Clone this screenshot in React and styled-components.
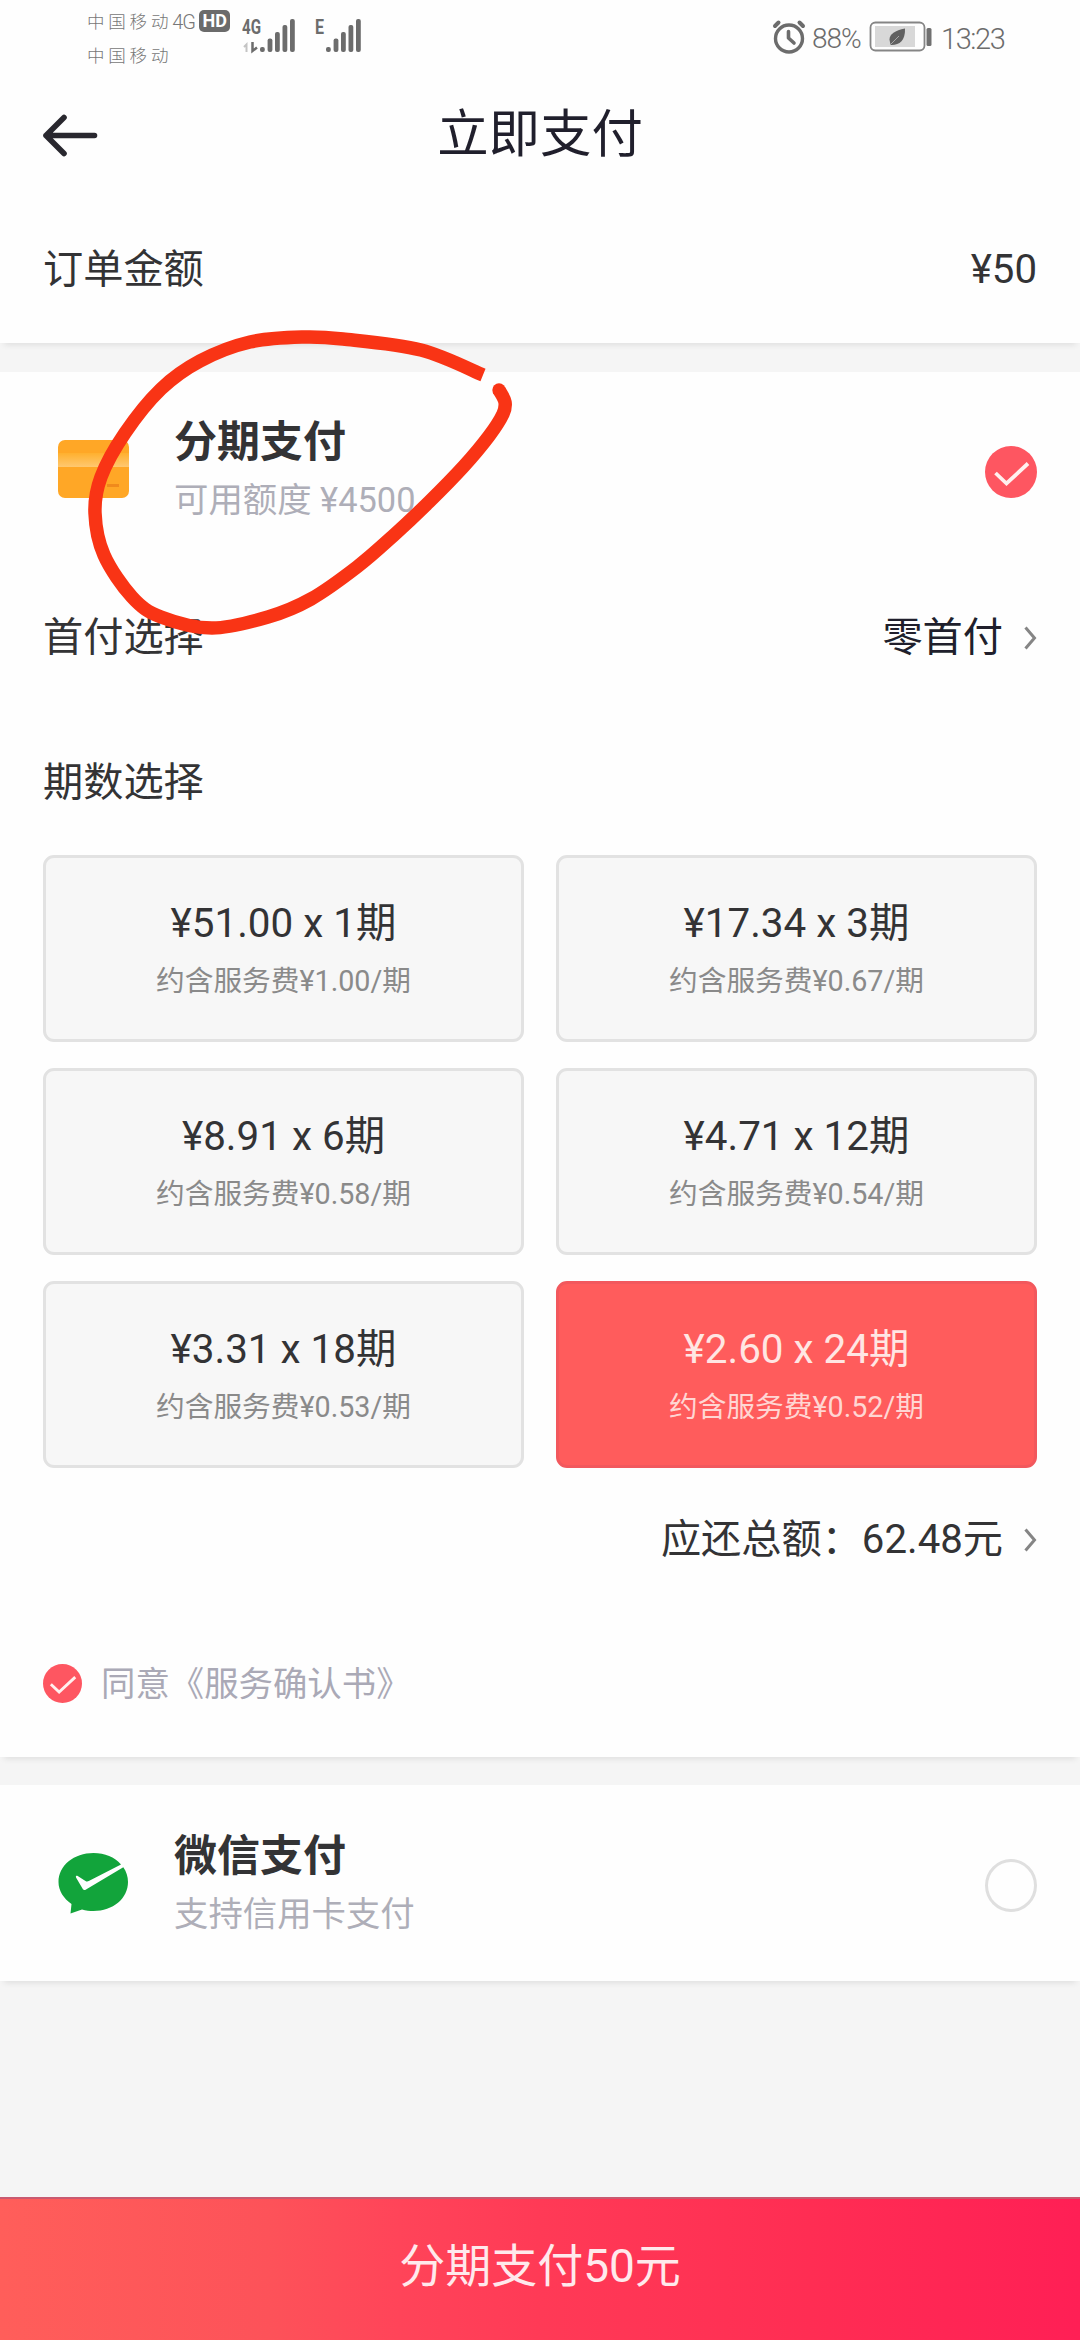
import React from "react";
import styled, { createGlobalStyle } from "styled-components";

const GlobalStyle = createGlobalStyle`
  *, *::before, *::after { box-sizing: border-box; }
  body {
    margin: 0;
    background: #f5f5f5;
    font-family: Roboto, "Noto Sans CJK SC", sans-serif;
    color: #333335;
  }
`;

const Page = styled.div`
  position: relative;
  display: flex;
  flex-direction: column;
  width: 1080px;
  height: 2340px;
  overflow: hidden;
  background: #f5f5f5;
`;

/* ---------- status bar ---------- */

const StatusBar = styled.div`
  display: flex;
  justify-content: space-between;
  height: 76px;
  padding: 0 76px 0 87px;
  background: #fefefe;
  color: #6c6c6c;
`;

const Carriers = styled.div`
  display: flex;
  flex-direction: column;
  gap: 4px;
  width: 144px;
  padding-top: 7px;
`;

const CarrierLine = styled.div`
  display: flex;
  align-items: center;
  height: 30px;
  font-size: 17.5px;
  font-weight: 300;
  line-height: 30px;
  white-space: nowrap;
  color: #777;
`;

const CarrierName = styled.span`
  letter-spacing: 3.8px;
`;

const NetworkTag = styled.span`
  width: 27px;
  font-size: 20px;
  letter-spacing: -1px;
`;

const HdBadge = styled.span`
  display: flex;
  align-items: center;
  justify-content: center;
  flex: none;
  width: 31px;
  height: 22px;
  margin-top: -3px;
  border-radius: 5px;
  background: #6b6b6b;
  color: #fff;
  font-family: Roboto, sans-serif;
  font-size: 18px;
  font-weight: 700;
  line-height: 20px;
`;

const StatusLeft = styled.div`
  display: flex;
`;

const Signals = styled.div`
  display: flex;
  gap: 19px;
  padding: 10px 0 0 11px;
`;

const StatusRight = styled.div`
  display: flex;
  padding-top: 18px;
`;

const StatusText = styled.span`
  width: ${(p) => p.$width}px;
  margin-left: ${(p) => p.$gap}px;
  padding-top: 5px;
  font-size: ${(p) => p.$size}px;
  font-weight: 300;
  line-height: 32px;
  letter-spacing: ${(p) => p.$track || 0}px;
  white-space: nowrap;
`;

const BatteryIcon = styled.svg`
  margin: 3px 0 0 9px;
`;

/* ---------- header ---------- */

const Header = styled.header`
  display: grid;
  grid-template-columns: 100px 1fr 100px;
  align-items: center;
  height: 120px;
  padding: 0 42px;
  background: #fefefe;
`;

const Title = styled.h1`
  margin: 0;
  padding-bottom: 2px;
  font-size: 51.4px;
  font-weight: 400;
  line-height: 60px;
  text-align: center;
  color: #201f2c;
`;

/* ---------- sections ---------- */

const Section = styled.section`
  display: flex;
  flex-direction: column;
  flex: none;
  height: ${(p) => p.$height}px;
  margin-bottom: ${(p) => p.$after || 0}px;
  padding: 0 43px;
  background: #fefefe;
  box-shadow: 0 6px 6px -4px rgba(0, 0, 0, 0.09);
`;

const Row = styled.div`
  display: flex;
  align-items: center;
  justify-content: ${(p) => (p.$end ? "flex-end" : "space-between")};
  flex: none;
  height: ${(p) => p.$height}px;
  font-size: 40.2px;
  line-height: 48px;
`;

const RowValue = styled.span`
  display: flex;
  align-items: center;
  gap: 21px;
  color: ${(p) => p.$color || "inherit"};
`;

const Method = styled.div`
  display: flex;
  align-items: center;
  flex: none;
  height: ${(p) => p.$height}px;
`;

const MethodIcon = styled.svg`
  flex: none;
  margin: 0 43px 0 14px;
`;

const MethodText = styled.div`
  display: flex;
  flex-direction: column;
  flex: 1;
  padding-top: 1px;
`;

const MethodName = styled.div`
  font-size: 43px;
  font-weight: 700;
  line-height: 60px;
`;

const MethodNote = styled.div`
  font-size: 34.4px;
  line-height: 56px;
  color: #aeaeb8;
`;

const MethodMark = styled.span`
  display: flex;
  padding-top: 5px;
`;

const EmptyRadio = styled.span`
  width: 52px;
  height: 53px;
  border: 3px solid #dfdfdf;
  border-radius: 50%;
`;

/* ---------- instalment plans ---------- */

const Plans = styled.div`
  display: grid;
  grid-template-columns: 1fr 1fr;
  grid-auto-rows: 187px;
  gap: 26px 32px;
`;

const Plan = styled.button`
  display: flex;
  flex-direction: column;
  align-items: center;
  margin: 0;
  padding: 39px 0 0;
  border: 3px solid ${(p) => (p.$selected ? "#f2585d" : "#e2e2e2")};
  border-radius: 11px;
  background: ${(p) => (p.$selected ? "#ff5c5c" : "#f7f7f7")};
  color: ${(p) => (p.$selected ? "#ffe6e3" : "#333335")};
  font-family: inherit;
`;

const PlanPrice = styled.span`
  font-size: 40.4px;
  line-height: 54px;
`;

const PlanFee = styled.span`
  margin-top: 10px;
  font-size: 28.7px;
  line-height: 40px;
  color: ${(p) => (p.$selected ? "#ffd6d3" : "#8a8a8a")};
`;

const Agreement = styled.div`
  display: flex;
  align-items: center;
  gap: 19px;
  height: 76px;
  font-size: 34.4px;
  line-height: 48px;
  color: #aaa9b6;
`;

const PayButton = styled.button`
  display: flex;
  align-items: center;
  justify-content: center;
  height: 143px;
  margin: auto 0 0;
  padding: 0 0 16px;
  border: 0;
  border-top: 2px solid #c95a70;
  background: linear-gradient(90deg, #ff5e5a 0%, #fd5259 25%, #ff4459 37%, #ff3a56 50%, #ff2d53 75%, #ff1f55 100%);
  color: #ffe9ec;
  font-family: inherit;
  font-size: 46px;
`;

/* ---------- pen mark ---------- */

const PenLayer = styled.svg`
  position: absolute;
  left: 0;
  top: 320px;
  pointer-events: none;
`;

function smoothPath(pts) {
  let d = `M${pts[0][0]} ${pts[0][1]}`;
  for (let i = 0; i < pts.length - 1; i++) {
    const a = pts[i - 1] || pts[i];
    const b = pts[i];
    const c = pts[i + 1];
    const e = pts[i + 2] || c;
    d += ` C${b[0] + (c[0] - a[0]) / 6} ${b[1] + (c[1] - a[1]) / 6} ${c[0] - (e[0] - b[0]) / 6} ${c[1] - (e[1] - b[1]) / 6} ${c[0]} ${c[1]}`;
  }
  return d;
}

const penPoints = [
  [483, 375], [421, 350], [343, 339], [304, 337], [250, 342], [200, 361],
  [161, 389], [125, 433], [101, 477], [95, 513], [104, 555], [132, 597],
  [161, 617], [212, 628], [268, 617], [311, 599], [357, 567],
  [393, 536], [429, 502], [464, 466], [489, 436], [503, 414], [505, 402], [499, 390],
];

function PenCircle() {
  return (
    <PenLayer width="540" height="330" viewBox="0 320 540 330" fill="none">
      <path d={smoothPath(penPoints)} stroke="#f93415" strokeWidth="13.5" strokeLinejoin="round" />
      <circle cx="499" cy="390" r="6.7" fill="#f93415" />
    </PenLayer>
  );
}

/* ---------- icons ---------- */

const signalBars = [
  [0, 29, 5],
  [7.6, 20.5, 13.5],
  [15, 14, 20],
  [22.5, 7, 27],
  [30, 1, 33],
];

function Signal({ label, data }) {
  const shift = data ? 18 : 11;
  return (
    <svg width={shift + 36} height="44" viewBox={`0 -8 ${shift + 36} 44`} fill="#6c6c6c">
      <text
        x="0"
        y="16"
        fontSize="20"
        fontWeight="700"
        fontFamily="Roboto, sans-serif"
        textLength={data ? 19 : 9}
        lengthAdjust="spacingAndGlyphs"
      >
        {label}
      </text>
      {data && (
        <g>
          <path d="M4.5 34V26.5L2 29" stroke="#c4c4c4" strokeWidth="2" fill="none" />
          <path d="M10.5 24V33L15 29.5" stroke="#6c6c6c" strokeWidth="2.5" fill="none" />
        </g>
      )}
      {signalBars.map(([x, y, h]) => (
        <rect key={x} x={shift + x} y={y} width="4.8" height={h} rx="2" />
      ))}
    </svg>
  );
}

function Alarm() {
  return (
    <svg width="34" height="36" fill="none" stroke="#6c6c6c" strokeLinecap="round">
      <circle cx="17" cy="20.5" r="13.5" strokeWidth="3.4" />
      <path d="M3 8L6.5 4.5M31 8L27.5 4.5" strokeWidth="4" />
      <path d="M16.5 13.5V20L22 25" strokeWidth="3.6" strokeLinejoin="round" />
    </svg>
  );
}

function Battery() {
  return (
    <BatteryIcon width="64" height="32" viewBox="0 0 64 32">
      <rect x="1.5" y="1.5" width="54" height="28" rx="5" fill="#fefefe" stroke="#858585" strokeWidth="1.8" />
      <rect x="6" y="5" width="40" height="21" fill="#d8d8d8" />
      <path d="M36 7.5C26 9.5 20.5 13 20.5 18.5L21.5 24C30 24.5 36.5 20 36 7.5Z" fill="#606060" />
      <path d="M21 24L30 15" stroke="#a6a6a6" strokeWidth="1" />
      <rect x="57.5" y="7" width="5" height="18" rx="1.5" fill="#707070" />
    </BatteryIcon>
  );
}

function BackArrow() {
  return (
    <svg width="58" height="44" fill="none" stroke="#29282f" strokeWidth="5.6" strokeLinecap="round" strokeLinejoin="round">
      <path d="M52.5 21.5H4M22 3.5L4 21.5L22 39.5" />
    </svg>
  );
}

function Chevron() {
  return (
    <svg width="13" height="26" fill="none" stroke="#858585" strokeWidth="3">
      <path d="M1.5 2.5L10.5 13L1.5 23.5" />
    </svg>
  );
}

function Checked({ size }) {
  return (
    <svg width={size} height={size} viewBox="0 0 52 52">
      <circle cx="26" cy="26" r="26" fill="#fe5661" />
      <path d="M10.5 27L21.5 37.5L43 17.5" fill="none" stroke="#fff0ee" strokeWidth="3.8" />
    </svg>
  );
}

function CardIcon() {
  return (
    <MethodIcon width="74" height="60" viewBox="0 0 74 60">
      <defs>
        <linearGradient id="stripe" x1="0" y1="0" x2="0" y2="1">
          <stop offset="0" stopColor="#ffb02e" />
          <stop offset="1" stopColor="#ffc870" />
        </linearGradient>
      </defs>
      <rect x="1" y="1" width="71" height="58" rx="7" fill="#ffa726" />
      <rect x="1" y="14" width="71" height="14" fill="url(#stripe)" />
      <rect x="50" y="45" width="12" height="3" fill="#f08a1c" />
    </MethodIcon>
  );
}

function WeChatPayIcon() {
  return (
    <MethodIcon width="74" height="64" viewBox="0 0 74 64">
      <path
        d="M36.5 2C17 2 1.5 14.5 1.5 31C1.5 39.5 6.5 47.5 14.5 53L13.5 62.5L25 58.5C29 59.5 32.5 60 36.5 60C56 60 71 47.5 71 31C71 25.5 69.3 20.6 66.3 16.3L29 38.5C27.5 39.5 26.3 39 25.5 37.5L19 26.5C18.5 25 19.5 24.3 20.7 25L28.5 30C29.6 30.7 30.6 30.7 31.8 30.1L64 13.5C57.5 6 48 2 36.5 2Z"
        fill="#12a43b"
      />
    </MethodIcon>
  );
}

/* ---------- content ---------- */

const plans = [
  { price: "¥51.00 x 1期", fee: "约含服务费¥1.00/期" },
  { price: "¥17.34 x 3期", fee: "约含服务费¥0.67/期" },
  { price: "¥8.91 x 6期", fee: "约含服务费¥0.58/期" },
  { price: "¥4.71 x 12期", fee: "约含服务费¥0.54/期" },
  { price: "¥3.31 x 18期", fee: "约含服务费¥0.53/期" },
  { price: "¥2.60 x 24期", fee: "约含服务费¥0.52/期", selected: true },
];

export default function App() {
  return (
    <Page>
      <GlobalStyle />
      <StatusBar>
        <StatusLeft>
          <Carriers>
            <CarrierLine>
              <CarrierName>中国移动</CarrierName>
              <NetworkTag>4G</NetworkTag>
              <HdBadge>HD</HdBadge>
            </CarrierLine>
            <CarrierLine>
              <CarrierName>中国移动</CarrierName>
            </CarrierLine>
          </Carriers>
          <Signals>
            <Signal label="4G" data />
            <Signal label="E" />
          </Signals>
        </StatusLeft>
        <StatusRight>
          <Alarm />
          <StatusText $width={48} $gap={6} $size={28} $track={-1}>88%</StatusText>
          <Battery />
          <StatusText $width={63} $gap={8} $size={29} $track={-1.4}>13:23</StatusText>
        </StatusRight>
      </StatusBar>

      <Header>
        <BackArrow />
        <Title>立即支付</Title>
      </Header>

      <Section $height={147} $after={29}>
        <Row $height={148}>
          <span>订单金额</span>
          <RowValue>¥50</RowValue>
        </Row>
      </Section>

      <Section $height={1385} $after={28}>
        <Method $height={194}>
          <CardIcon />
          <MethodText>
            <MethodName>分期支付</MethodName>
            <MethodNote>可用额度 ¥4500</MethodNote>
          </MethodText>
          <MethodMark>
            <Checked size={52} />
          </MethodMark>
        </Method>
        <Row $height={144}>
          <span>首付选择</span>
          <RowValue $color="#201f2c">
            零首付 <Chevron />
          </RowValue>
        </Row>
        <Row $height={145}>
          <span>期数选择</span>
        </Row>
        <Plans>
          {plans.map((p) => (
            <Plan key={p.price} $selected={p.selected}>
              <PlanPrice>{p.price}</PlanPrice>
              <PlanFee $selected={p.selected}>{p.fee}</PlanFee>
            </Plan>
          ))}
        </Plans>
        <Row $height={144} $end>
          <RowValue>
            应还总额：62.48元 <Chevron />
          </RowValue>
        </Row>
        <Row $height={143}>
          <Agreement>
            <Checked size={39} />
            <span>同意《服务确认书》</span>
          </Agreement>
        </Row>
      </Section>

      <Section $height={196}>
        <Method $height={196}>
          <WeChatPayIcon />
          <MethodText>
            <MethodName>微信支付</MethodName>
            <MethodNote>支持信用卡支付</MethodNote>
          </MethodText>
          <MethodMark>
            <EmptyRadio />
          </MethodMark>
        </Method>
      </Section>

      <PayButton>分期支付50元</PayButton>
      <PenCircle />
    </Page>
  );
}
